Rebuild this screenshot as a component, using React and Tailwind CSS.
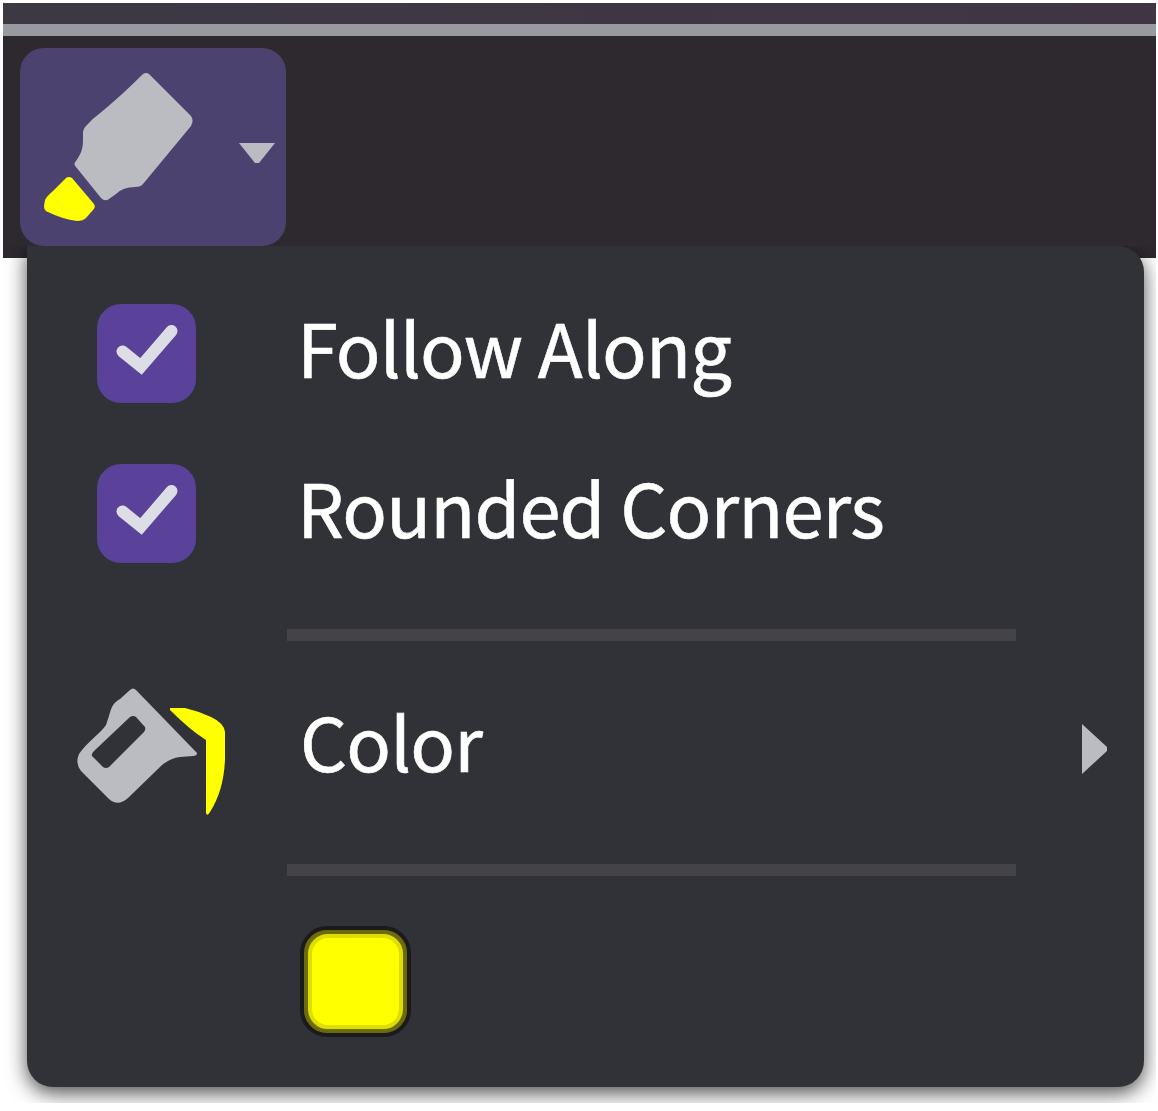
function Highlighter() {
  return (
    <svg className="ml-6 mt-[22px] h-[154px] w-[150px] shrink-0" viewBox="44 70 150 154">
      <path fill="#bbbcc1" d="M143 74Q146 72 149 74L191 116Q194 120 191 126L143 184Q141 187 135 187Q123 187 116 194L109 199Q105 202 101 198L76 167Q73 164 76 161C84 150 83 144 83 132Q84 127 88 124Q92 119 99 114Q121 96 143 74Z" />
      <path fill="#ff0" d="M66 178Q69 176 72 178L94 204Q96 207 93 210L86 218Q83 221 77 221Q62 219 48 212Q44 211 44 206L45 200Q47 196 53 191Z" />
    </svg>
  );
}

function Bucket() {
  return (
    <svg className="h-[130px] w-[150px] shrink-0" viewBox="77 687 150 130">
      <path fill="#bbbcc1" fillRule="evenodd" d="M130 690Q133 687 136 690L197 753Q197 756 193 756L180 757Q170 758 161 766L128 798Q118 807 109 799L81 771Q75 763 79 754C87 742 101 733 106 725C112 709 110 705 120 699ZM130 717Q133 715 136 717L145 727Q146 729 144 732L109 767Q106 769 103 767L92 756Q91 754 94 751Z" />
      <path fill="#ff0" d="M170 708L185 708Q198 711 211 717Q224 723 225 732L225 759Q224 790 210 812Q207 817 206 813L206 740Q190 730 170 710Z" />
    </svg>
  );
}

function Checkbox() {
  return (
    <span className="grid size-[99px] shrink-0 place-items-center rounded-[24px] bg-[#5a4199]">
      <svg className="size-full" viewBox="0 0 99 99" fill="none">
        <path d="M25.5 47.5L44 62.5L74.5 27" stroke="#dddde6" strokeWidth="12" strokeLinecap="round" />
      </svg>
    </span>
  );
}

function Label({ children }) {
  return (
    <span className="block whitespace-nowrap font-['Noto_Sans_CJK_SC','Noto_Sans',sans-serif] text-[74px] leading-[100px] tracking-[-0.9px] text-white [-webkit-text-stroke:0.6px_white]">
      {children}
    </span>
  );
}

function CheckRow({ children }) {
  return (
    <div className="flex h-[99px] items-center pl-[70px]">
      <Checkbox />
      <div className="ml-[101px] pb-4"><Label>{children}</Label></div>
    </div>
  );
}

export default function App() {
  return (
    <div className="h-[1111px] w-[1158px] overflow-hidden bg-white pl-[3px] pt-[3px]">
      <div className="h-[1100px] w-[1153px] overflow-hidden">
        <div className="h-[21px] bg-linear-to-r from-[#3c3943] to-[#403643]" />
        <div className="h-3 bg-[#999a9f]" />
        <div className="h-[222px] bg-[#2d292f] pl-[17px] pt-3">
          <button className="flex h-[198px] w-[266px] rounded-[24px] bg-[#4c4270]">
            <Highlighter />
            <svg className="ml-[45px] mt-[94px] h-[22px] w-9 shrink-0" viewBox="0 0 36 22">
              <path fill="#bbbcc1" d="M0 1H36L20 21H16Z" />
            </svg>
          </button>
        </div>
        <div className="relative -mt-3 ml-[24px] h-[841px] w-[1117px] rounded-[26px] rounded-tl-none bg-[#313237] pt-[58px] shadow-[0_6px_20px_rgba(0,0,0,0.7)] [clip-path:inset(0_-30px_-30px_-30px)]">
          <CheckRow>Follow Along</CheckRow>
          <div className="h-[61px]" />
          <CheckRow>Rounded Corners</CheckRow>
          <div className="ml-[260px] mt-[66px] h-3 w-[729px] bg-[#434348]" />
          <div className="mt-[46px] flex h-[130px] items-center pl-[50px]">
            <Bucket />
            <div className="ml-[73px] pb-6"><Label>Color</Label></div>
            <svg className="mb-1.5 ml-auto mr-[37px] h-[50px] w-[25px]" viewBox="0 0 25 50">
              <path fill="#bbbcc1" d="M0 0L25 23V27L0 50Z" />
            </svg>
          </div>
          <div className="ml-[260px] mt-[47px] h-3 w-[729px] bg-[#434348]" />
          <div className="ml-[273px] mt-[50px] size-[111px] rounded-[27px] border-4 border-[#1b1b1d]">
            <div className="size-full rounded-[23px] border-4 border-[#6c6b08] bg-[#6c6b08]">
              <div className="size-full rounded-[20px] border-4 border-[#dede04] bg-[#ff0]" />
            </div>
          </div>
        </div>
      </div>
    </div>
  );
}
